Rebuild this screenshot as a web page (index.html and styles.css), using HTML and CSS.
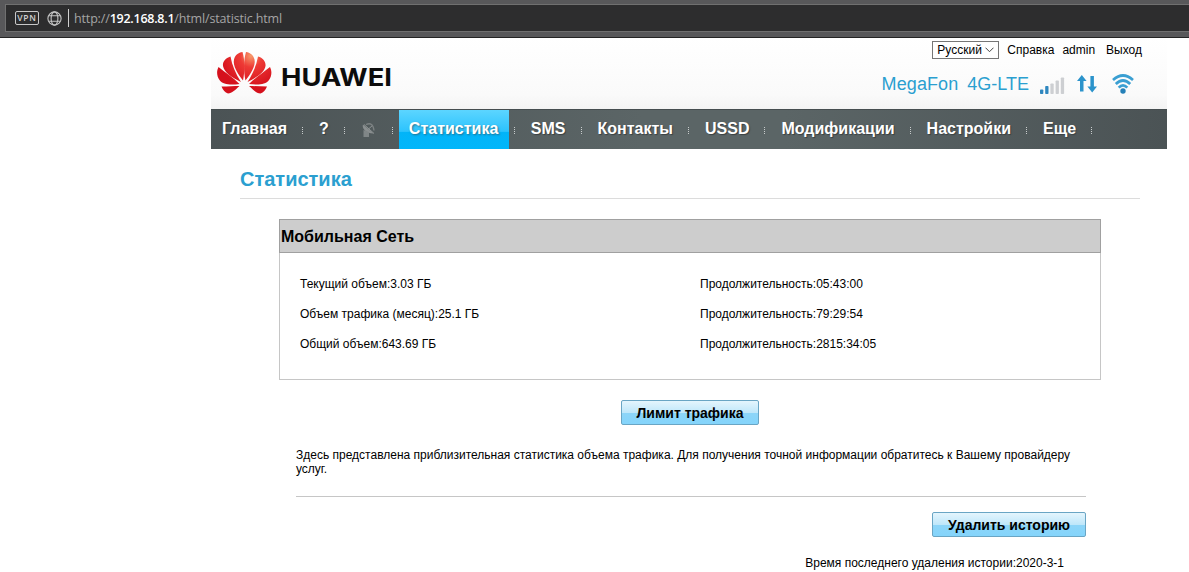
FILE: index.html
```
<!DOCTYPE html>
<html lang="ru">
<head>
    <meta charset="UTF-8">
    <title>Статистика</title>
    <link rel="stylesheet" href="styles.css">
</head>
<body>
    <div class="browser-bar">
        <div class="address">
            <span class="vpn">VPN</span>
            <svg class="globe" width="15" height="15" viewBox="0 0 15 15" fill="none" stroke="#c4c4c4" stroke-width="1.1">
                <circle cx="7.5" cy="7.5" r="6.6"/>
                <ellipse cx="7.5" cy="7.5" rx="3.4" ry="6.6"/>
                <path d="M1.800 4.800h11.400M1.800 10.200h11.400"/>
            </svg>
            <span class="divider"></span>
            <span class="url">http://<b>192.168.8.1</b>/html/statistic.html</span>
        </div>
    </div>

    <div class="page">
        <div class="header">
            <svg class="logo" width="180" height="48" viewBox="0 0 180 48">
                <defs>
                    <radialGradient id="petal" gradientUnits="userSpaceOnUse" cx="34" cy="6" r="32">
                        <stop offset="0" stop-color="#f79a6c"/>
                        <stop offset="0.35" stop-color="#ee3a35"/>
                        <stop offset="1" stop-color="#d5101c"/>
                    </radialGradient>
                </defs>
                <g fill="url(#petal)">
                    <path d="M26 30.500C21 24 15.500 16 17 9.500C18 5 21.500 2.500 25.500 2C28 10 28 21 26 30.500Z"/>
                    <path d="M28.500 30.500C26.500 21 26.500 10 29 2C33 2.500 36.500 5 37.500 9.500C39 16 33.500 24 28.500 30.500Z"/>
                    <path d="M24 32C15 27.500 7 22.500 6 16C5.500 11.500 8.500 8 13.500 6.500C15 15 18.500 23.500 24 32Z"/>
                    <path d="M30.500 32C39.500 27.500 47.500 22.500 48.500 16C49 11.500 46 8 41 6.500C39.500 15 36 23.500 30.500 32Z"/>
                    <path d="M22.500 34C14 35 6 35 2.500 30C-0.500 26 -0.500 21 1.500 17C8.500 22.500 16.500 28 22.500 34Z"/>
                    <path d="M32 34C40.500 35 48.500 35 52 30C55 26 55 21 53 17C46 22.500 38 28 32 34Z"/>
                    <path d="M22.500 36C18.500 39.500 15 43.500 11 43.500C8 42.500 6 40 4.500 36.500C11 36.500 17 36 22.500 36Z"/>
                    <path d="M32 36C36 39.500 39.500 43.500 43.500 43.500C46.500 42.500 48.500 40 50 36.500C43.500 36.500 37.500 36 32 36Z"/>
                </g>
                <text class="logo-text" x="64" y="36" textLength="111" lengthAdjust="spacingAndGlyphs">HUAWEI</text>
            </svg>

            <div class="header-right">
                <div class="user-links">
                    <span class="lang">Русский
                        <svg width="9" height="6" viewBox="0 0 9 6" fill="none" stroke="#444"><path d="M0.500 0.700L4.500 4.700l4-4"/></svg>
                    </span>
                    <a class="help">Справка</a>
                    <a class="admin">admin</a>
                    <a>Выход</a>
                </div>
                <div class="network">
                    <span class="operator">MegaFon</span>
                    <span class="mode">4G-LTE</span>
                    <svg class="signal" width="25" height="18" viewBox="0 0 25 18">
                        <g fill="#2f87bf">
                            <rect x="0" y="12.500" width="3.300" height="4.500" rx="0.800"/>
                            <rect x="5.200" y="9" width="3.300" height="8" rx="0.800"/>
                        </g>
                        <g fill="#cdcfd2">
                            <rect x="10.400" y="6.500" width="3.300" height="10.500" rx="0.800"/>
                            <rect x="15.600" y="3.500" width="3.300" height="13.500" rx="0.800"/>
                            <rect x="20.800" y="0.500" width="3.300" height="16.500" rx="0.800"/>
                        </g>
                    </svg>
                    <svg class="arrows" width="20" height="18" viewBox="0 0 20 18" fill="#2b93cb">
                        <path d="M4.800 0l4.800 6H6.500v10.500H3V6H0z"/>
                        <path d="M15.200 17.500l-4.800-6h3V1h3.500v10.500H20z"/>
                    </svg>
                    <svg class="wifi" width="22" height="20" viewBox="0 0 22 20" fill="none" stroke="#3a9fd2" stroke-width="2.700">
                        <path d="M1 6Q11-3 21 6"/>
                        <path d="M3.800 10Q11 3 18.200 10"/>
                        <path d="M6.700 13.600Q11 9 15.300 13.600"/>
                        <circle cx="11" cy="17" r="2.700" fill="#2580b8" stroke="none"/>
                    </svg>
                </div>
            </div>
        </div>

        <div class="menu">
            <a>Главная</a><i></i>
            <a>?</a><i></i>
            <a class="antenna">
                <svg width="16" height="16" viewBox="0 0 16 16">
                    <path d="M2 2.500C0.500 6.500 5 11.500 12.500 11.500z" fill="#8a8f90"/>
                    <path d="M2.500 8V15h5.500V10z" fill="#808687"/>
                    <path d="M3 2.500L13 11.500M7.500 7L12 3" stroke="#8f9495" fill="none"/>
                    <path d="M5 2.500Q12-0.500 13 8.500" stroke="#7c8283" stroke-width="1.300" fill="none"/>
                </svg>
            </a><i></i>
            <a class="active">Статистика</a><i></i>
            <a>SMS</a><i></i>
            <a>Контакты</a><i></i>
            <a>USSD</a><i></i>
            <a>Модификации</a><i></i>
            <a>Настройки</a><i></i>
            <a>Еще</a><i></i>
        </div>

        <div class="content">
            <h1>Статистика</h1>

            <div class="box">
                <h2>Мобильная Сеть</h2>
                <div class="stats">
                    <span>Текущий объем:3.03 ГБ</span><span>Продолжительность:05:43:00</span>
                    <span>Объем трафика (месяц):25.1 ГБ</span><span>Продолжительность:79:29:54</span>
                    <span>Общий объем:643.69 ГБ</span><span>Продолжительность:2815:34:05</span>
                </div>
            </div>

            <div class="limit">
                <button class="limit-button">Лимит трафика</button>
            </div>

            <div class="notice">
                <p>Здесь представлена приблизительная статистика объема трафика. Для получения точной информации обратитесь к Вашему провайдеру<br>услуг.</p>
            </div>

            <div class="history">
                <button class="clear-button">Удалить историю</button>
                <p>Время последнего удаления истории:2020-3-1</p>
            </div>
        </div>
    </div>
</body>
</html>
```
FILE: styles.css
```
* {
    box-sizing: border-box;
}

body {
    margin: 0;
    height: 572px;
    overflow: hidden;
    background: #fff;
    font-family: "Liberation Sans", Arial, sans-serif;
    font-size: 12px;
    color: #000;
}

h1, h2, p {
    margin: 0;
}

/* browser address bar */
.browser-bar {
    height: 38px;
    padding: 4px 0 0 5px;
    background: #58585a;
    border-bottom: 1px solid #242424;
}

.address {
    display: flex;
    align-items: center;
    height: 28px;
    padding-left: 9px;
    background: #2d2d2e;
    border: 1px solid #707070;
    border-right: none;
}

.vpn {
    width: 24px;
    height: 14px;
    border: 1px solid #c8c8c8;
    border-radius: 2px;
    font: 600 8.5px/12px "Open Sans", sans-serif;
    letter-spacing: 0.7px;
    text-align: center;
    color: #d0d0d0;
}

.globe {
    margin-left: 8px;
}

.divider {
    width: 1px;
    height: 18px;
    margin: 0 5px 0 6px;
    background: #d0d0d0;
}

.url {
    font: 12.5px "Open Sans", sans-serif;
    letter-spacing: -0.15px;
    color: #a5a5a5;
}

.url b {
    font-weight: 600;
    letter-spacing: -0.25px;
    color: #fff;
}

/* header */
.page {
    width: 956px;
    margin-left: 211px;
}

.header {
    display: flex;
    justify-content: space-between;
    height: 71px;
    background: linear-gradient(#fff, #fafafa 80%, #f3f3f3);
}

.logo {
    margin: 12px 0 0 6px;
}

.logo-text {
    font: 700 24px Inter, sans-serif;
    fill: #0c0c0c;
}

.header-right {
    padding: 3px 25px 0 0;
}

.user-links {
    display: flex;
    justify-content: flex-end;
    align-items: center;
    height: 18px;
}

.lang {
    display: flex;
    align-items: center;
    justify-content: space-between;
    width: 67px;
    height: 18px;
    padding: 0 4px;
    background: #fff;
    border: 1px solid #767676;
}

.help {
    margin: 0 8px;
}

.admin {
    margin-right: 11px;
}

.network {
    display: flex;
    align-items: center;
    justify-content: flex-end;
    height: 22px;
    margin-top: 14px;
    padding-right: 8px;
    font-size: 18px;
    color: #2b9fd0;
}

.operator {
    letter-spacing: 0.1px;
    margin-right: 9px;
}

.signal {
    margin: 3px 12px 0 11px;
}

.arrows {
    margin-right: 15px;
}

/* main menu */
.menu {
    display: flex;
    align-items: center;
    height: 40px;
    padding-left: 1px;
    background: linear-gradient(90deg, #4b5355, #5b6566 45%, #5b6566 60%, #4b5355);
    border-top: 1px solid #454d4f;
    color: #fff;
}

.menu a {
    height: 39px;
    padding: 0 10px;
    font-size: 16px;
    font-weight: bold;
    line-height: 37px;
    text-shadow: 1px 1px 1px #3a4042;
    white-space: nowrap;
}

.menu i {
    width: 1px;
    height: 8px;
    margin: 2px 6px 0 5px;
    background: repeating-linear-gradient(#c8cccc 0 1px, transparent 1px 2px);
}

.menu .antenna {
    display: flex;
    align-items: center;
}

.menu .active {
    width: 110px;
    background: linear-gradient(#5cd5ff, #2cc3fd 55%, #02b4f8 56%, #00b6fa);
    text-shadow: 1px 1px 2px #23718f;
}

/* content */
.content {
    padding: 0 27px 0 29px;
}

h1 {
    height: 50px;
    border-bottom: 1px solid #dcdcdc;
    font-size: 20px;
    line-height: 60px;
    color: #2b9fd0;
}

.box {
    width: 822px;
    height: 161px;
    margin: 20px 0 0 39px;
    border: 1px solid #c6c6c6;
}

h2 {
    height: 34px;
    margin: -1px 0 0 -1px;
    padding-left: 1px;
    width: 822px;
    background: #cdcdcd;
    border: 1px solid #a0a0a0;
    font-size: 16px;
    line-height: 34px;
}

.stats {
    display: grid;
    grid-template-columns: 400px 1fr;
    grid-auto-rows: 30px;
    padding: 16px 0 0 20px;
    line-height: 30px;
}

.limit {
    display: flex;
    justify-content: center;
    margin-top: 20px;
}

button {
    height: 25px;
    padding: 0;
    background: linear-gradient(#e4f5fd, #bfe7fa 50%, #8dd5f8 51%, #84d4fb);
    border: 1px solid #69a5c4;
    border-radius: 2px;
    font: bold 14px "Liberation Sans", Arial, sans-serif;
    color: #000;
}

.limit-button {
    width: 138px;
}

.clear-button {
    width: 154px;
}

.notice {
    width: 790px;
    height: 72px;
    margin-left: 56px;
    padding-top: 23px;
    border-bottom: 1px solid #c6c6c6;
    line-height: 14px;
    white-space: nowrap;
}

.history {
    display: flex;
    flex-direction: column;
    align-items: flex-end;
    width: 790px;
    margin: 15px 0 0 56px;
}

.history p {
    margin: 19px 22px 0 0;
}
```
